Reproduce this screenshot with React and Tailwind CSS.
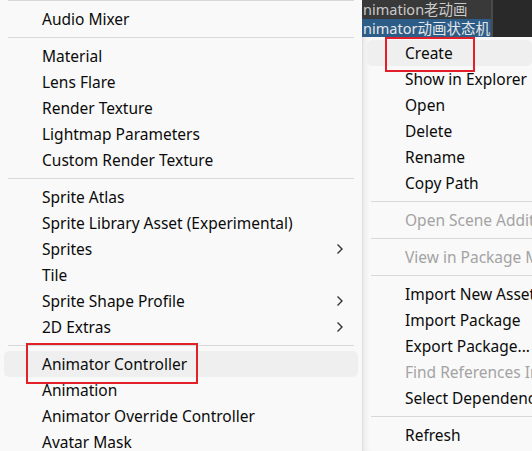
import React from 'react'

const font = { fontFamily: '"Noto Sans", "Noto Sans CJK SC", sans-serif' }

const leftGroups = [
  [{ label: 'Audio Mixer' }],
  [
    { label: 'Material' },
    { label: 'Lens Flare' },
    { label: 'Render Texture' },
    { label: 'Lightmap Parameters' },
    { label: 'Custom Render Texture' },
  ],
  [
    { label: 'Sprite Atlas' },
    { label: 'Sprite Library Asset (Experimental)' },
    { label: 'Sprites', sub: true },
    { label: 'Tile' },
    { label: 'Sprite Shape Profile', sub: true },
    { label: '2D Extras', sub: true },
  ],
  [
    { label: 'Animator Controller', active: true, box: 'left-[22px] -top-[8px] h-[41px] w-[172px]' },
    { label: 'Animation' },
    { label: 'Animator Override Controller' },
    { label: 'Avatar Mask' },
  ],
]

const rightGroups = [
  [
    { label: 'Create', active: true, box: 'left-[18px] -top-[3px] h-[35px] w-[90px]' },
    { label: 'Show in Explorer' },
    { label: 'Open' },
    { label: 'Delete' },
    { label: 'Rename' },
    { label: 'Copy Path' },
  ],
  [{ label: 'Open Scene Additive', disabled: true }],
  [{ label: 'View in Package Manager', disabled: true }],
  [
    { label: 'Import New Asset...' },
    { label: 'Import Package' },
    { label: 'Export Package...' },
    { label: 'Find References In Scene', disabled: true },
    { label: 'Select Dependencies' },
  ],
  [{ label: 'Refresh' }],
]

function Chevron() {
  return (
    <svg width="8" height="12" viewBox="0 0 8 12" className="absolute right-[14px] top-[7px]">
      <polyline points="1.5,1.5 6,6 1.5,10.5" fill="none" stroke="#333" strokeWidth="1.4" />
    </svg>
  )
}

// 紅框標註：位置直接相對於該列
function Item({ item }) {
  return (
    <div
      className={`relative flex h-[26px] items-center whitespace-nowrap rounded-[5px] pl-[38px] pt-[2px] ${
        item.active ? 'bg-[#efefef]' : ''
      } ${item.disabled ? 'text-[#a3a3a3]' : 'text-[#0b0b0b]'}`}
    >
      {item.label}
      {item.box ? <span className={`absolute border-2 border-[#e3202a] ${item.box}`} /> : null}
      {item.sub ? <Chevron /> : null}
    </div>
  )
}

function Separator({ className }) {
  return <div className={`h-px bg-[#d9d9d9] ${className}`} />
}

export default function App() {
  return (
    <div className="flex h-[451px] w-[532px] overflow-hidden text-[15.5px] leading-none" style={font}>
      <div className="flex w-[362px] shrink-0 flex-col bg-[#f9f9f9]">
        {leftGroups.map((group, i) => (
          <div key={i} className="flex flex-col">
            <Separator className={`mx-[8px] ${i === 0 ? 'mb-[5px]' : 'mb-[5px] mt-[5px]'}`} />
            <div className="flex flex-col px-[4px]">
              {group.map((item) => (
                <Item key={item.label} item={item} />
              ))}
            </div>
          </div>
        ))}
      </div>
      <div className="flex min-w-0 flex-1 flex-col">
        <div className="flex h-[37px] shrink-0 bg-[#292929] text-[14.5px]">
          <div className="flex w-[131px] flex-col overflow-hidden border-r-2 border-[#4a4a4a]">
            <div className="flex h-[19px] items-center whitespace-nowrap bg-[#393939] pl-[1px] text-[#c9c9c9]">
              nimation老动画
            </div>
            <div className="flex h-[18px] items-center whitespace-nowrap bg-[#2c5d88] pl-[1px] text-[#e6e6e6]">
              nimator动画状态机
            </div>
          </div>
        </div>
        <div className="flex flex-1 flex-col border-l border-[#dedede] bg-[#f9f9f9] pt-[3px] shadow-[inset_6px_0_6px_-4px_rgba(0,0,0,0.08)]">
          {rightGroups.map((group, i) => (
            <div key={i} className="flex flex-col">
              {i > 0 ? <Separator className="my-[5px] ml-[8px]" /> : null}
              <div className="flex flex-col pl-[4px]">
                {group.map((item) => (
                  <Item key={item.label} item={item} />
                ))}
              </div>
            </div>
          ))}
        </div>
      </div>
    </div>
  )
}
